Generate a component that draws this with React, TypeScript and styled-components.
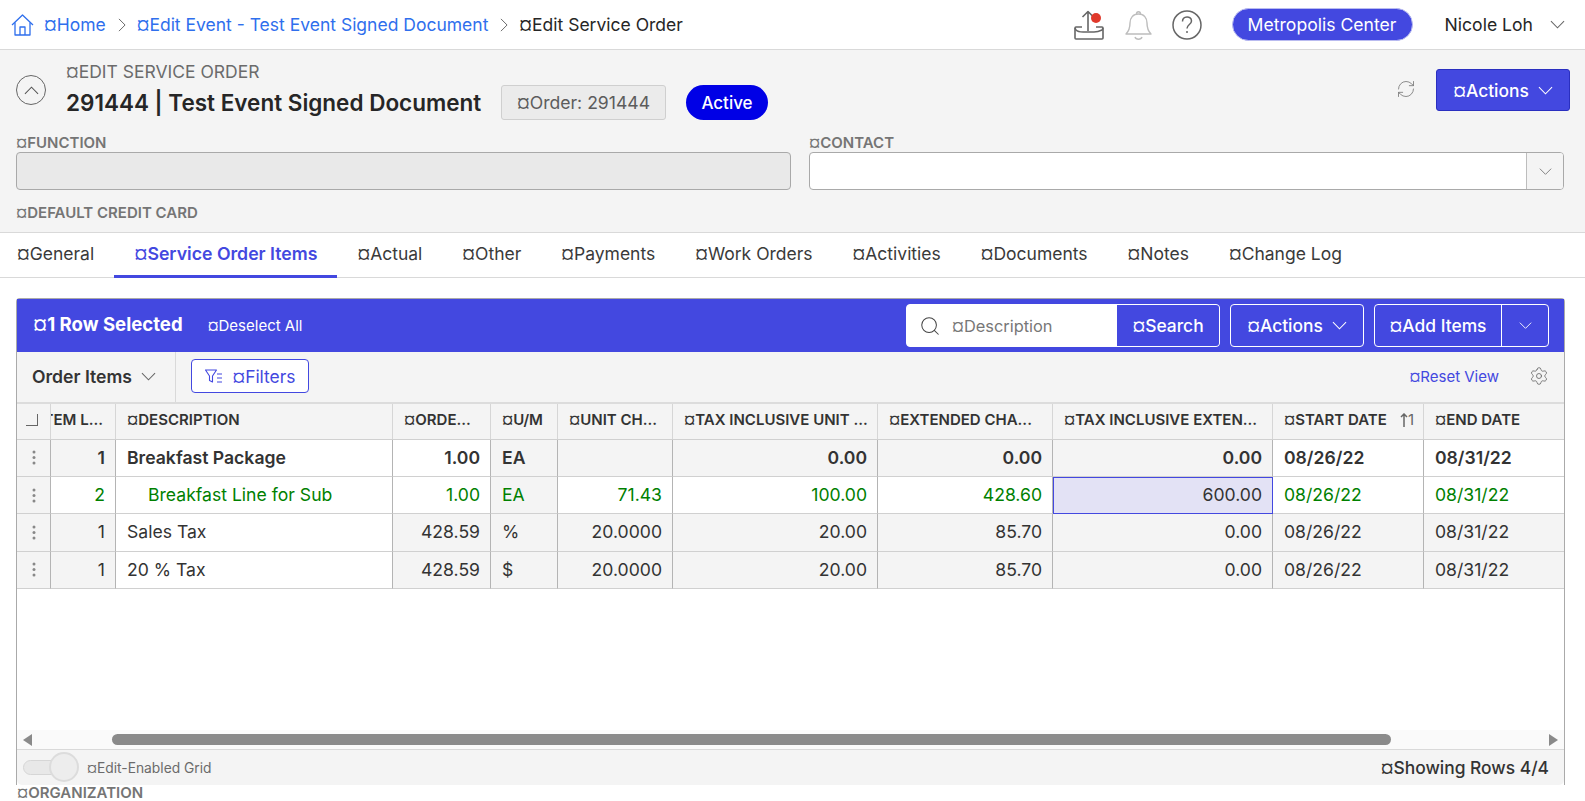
import React from "react";
import styled, { createGlobalStyle } from "styled-components";
import { RefreshCw, Search, Settings } from "lucide-react";

const GlobalStyle = createGlobalStyle`
  html, body {
    margin: 0;
    padding: 0;
    height: 100%;
    overflow: hidden;
    background: #fff;
    font-family: Inter, "Liberation Sans", sans-serif;
    color: #262626;
  }
`;

const BLUE = "#4348e0";
const COLUMNS = "34px 65px 277px 98px 67px 115px 205px 175px 220px 151px 140px";

const Page = styled.div`
  height: 801px;
  overflow: hidden;
`;

const TopBar = styled.header`
  height: 49px;
  border-bottom: 1px solid #d9d9d9;
  display: flex;
  align-items: center;
  padding: 0 20px 0 11px;
  font-size: 17.6px;
`;

const Crumb = styled.span<{ $current?: boolean }>`
  color: ${(p) => (p.$current ? "#262626" : "#2f6fed")};
  font-size: 17.5px;
  white-space: nowrap;
`;

const CrumbSep = styled.span`
  display: flex;
  color: #666;
  margin: 0 8px 0 9px;
`;

const HomeLink = styled.span`
  display: flex;
  margin-right: 10px;
  color: #2f6fed;
`;

const TopIcons = styled.div`
  margin-left: auto;
  display: flex;
  align-items: center;
  gap: 20px;
`;

const UploadSlot = styled.span`
  display: flex;
  margin-right: 1px;
`;

const Pill = styled.div`
  width: 181px;
  height: 33px;
  margin-left: 10px;
  box-sizing: border-box;
  border: 1px solid #b9bbf0;
  border-radius: 17px;
  background: ${BLUE};
  color: #fff;
  display: flex;
  align-items: center;
  justify-content: center;
  white-space: nowrap;
`;

const UserName = styled.div`
  display: flex;
  align-items: center;
  margin-left: 12px;
  gap: 17px;
  color: #262626;
  white-space: nowrap;

  svg {
    color: #666;
  }
`;

const HeaderPanel = styled.section`
  height: 183px;
  box-sizing: border-box;
  background: #f4f4f4;
  border-bottom: 1px solid #d9d9d9;
  padding: 12px 15px 0 16px;
`;

const HeaderTop = styled.div`
  display: flex;
  height: 73px;
`;

const Collapse = styled.div`
  width: 30px;
  height: 30px;
  box-sizing: border-box;
  margin-top: 13px;
  border: 1px solid #666;
  border-radius: 50%;
  display: flex;
  align-items: center;
  justify-content: center;
  color: #555;
`;

const TitleBlock = styled.div`
  margin-left: 20px;
`;

const Eyebrow = styled.div`
  font-size: 17.5px;
  line-height: 20px;
  color: #6b6b6b;
  white-space: nowrap;
`;

const TitleRow = styled.div`
  display: flex;
  align-items: flex-start;
  margin-top: 3px;
`;

const Title = styled.h1`
  margin: 0;
  width: 435px;
  font-size: 22.5px;
  line-height: 35px;
  font-weight: 600;
  color: #262626;
  white-space: nowrap;
`;

const OrderTag = styled.div`
  width: 165px;
  height: 35px;
  box-sizing: border-box;
  border: 1px solid #cfcfcf;
  border-radius: 3px;
  background: #ebebeb;
  color: #5c5c5c;
  font-size: 17.6px;
  display: flex;
  align-items: center;
  justify-content: center;
`;

const Status = styled.div`
  width: 82px;
  height: 35px;
  margin-left: 20px;
  border-radius: 18px;
  background: #0000e6;
  color: #fff;
  font-size: 17px;
  font-weight: 500;
  display: flex;
  align-items: center;
  justify-content: center;
`;

const HeaderActions = styled.div`
  margin-left: auto;
  display: flex;
  align-items: flex-start;
  gap: 20px;
  padding-top: 7px;
  color: #777;
`;

const RefreshSlot = styled.span`
  display: flex;
  margin-top: 10px;
`;

const PrimaryButton = styled.button`
  width: 134px;
  height: 42px;
  padding: 0;
  border: 1px solid #2a2fc0;
  border-radius: 3px;
  background: ${BLUE};
  color: #fff;
  font: 500 17.4px Inter, sans-serif;
  display: flex;
  align-items: center;
  justify-content: center;
  gap: 9px;
`;

const Fields = styled.div`
  display: grid;
  grid-template-columns: 1fr 755px;
  column-gap: 18px;
  padding-right: 6px;
`;

const FieldLabel = styled.label`
  display: block;
  font-size: 15px;
  line-height: 16px;
  padding-bottom: 1px;
  font-weight: 600;
  color: #757575;
  white-space: nowrap;
`;

const InputBox = styled.div<{ $disabled?: boolean }>`
  height: 38px;
  box-sizing: border-box;
  border: 1px solid #a9a9a9;
  border-radius: 4px;
  background: ${(p) => (p.$disabled ? "#e9e9e9" : "#fff")};
  display: flex;
  justify-content: flex-end;
`;

const SelectToggle = styled.div`
  width: 36px;
  border-left: 1px solid #bdbdbd;
  background: #f4f4f4;
  border-radius: 0 3px 3px 0;
  display: flex;
  align-items: center;
  justify-content: center;
  color: #777;
`;

const CardLabel = styled(FieldLabel)`
  margin-top: 15px;
`;

const TabBar = styled.nav`
  height: 44px;
  border-bottom: 1px solid #d9d9d9;
  display: flex;
`;

const Tab = styled.div<{ $active?: boolean }>`
  padding: 0 20px 1px;
  display: flex;
  align-items: center;
  font-size: ${(p) => (p.$active ? "17.7px" : "17.5px")};
  font-weight: ${(p) => (p.$active ? 600 : 400)};
  color: ${(p) => (p.$active ? BLUE : "#3a3a3a")};
  border-bottom: 3px solid ${(p) => (p.$active ? BLUE : "transparent")};
  margin-bottom: -1px;
  white-space: nowrap;

  &:first-child {
    padding-left: 17px;
  }
`;

const GridPanel = styled.section`
  height: 487px;
  margin: 20px 20px 0 16px;
  box-sizing: border-box;
  border: solid #aaa;
  border-width: 1px 1px 0;
  border-radius: 4px 4px 0 0;
  display: flex;
  flex-direction: column;
`;

const SelectionBar = styled.div`
  height: 53px;
  flex: none;
  background: ${BLUE};
  color: #fff;
  display: flex;
  align-items: center;
  padding: 0 15px 0 16px;
`;

const SelectedCount = styled.div`
  font-size: 18.6px;
  font-weight: 700;
  margin-bottom: 3px;
  white-space: nowrap;
`;

const Deselect = styled.div`
  font-size: 15px;
  margin-left: 25px;
  white-space: nowrap;
`;

const BarControls = styled.div`
  margin-left: auto;
  display: flex;
  gap: 10px;
`;

const SearchGroup = styled.div`
  width: 314px;
  height: 43px;
  box-sizing: border-box;
  border-radius: 4px;
  background: #fff;
  display: flex;
  overflow: hidden;
  border: 1px solid #fff;
`;

const SearchField = styled.div`
  flex: 1;
  display: flex;
  align-items: center;
  gap: 11px;
  padding-left: 12px;
  color: #444;
  font-size: 16.4px;

  span {
    color: #777;
  }
`;

const SearchButton = styled.div`
  width: 102px;
  background: ${BLUE};
  color: #fff;
  font-size: 17.4px;
  font-weight: 500;
  display: flex;
  align-items: center;
  justify-content: center;
`;

const OutlineGroup = styled.div<{ $width: number }>`
  width: ${(p) => p.$width}px;
  height: 43px;
  box-sizing: border-box;
  border: 1px solid #fff;
  border-radius: 4px;
  color: #fff;
  font-size: 17.4px;
  font-weight: 500;
  display: flex;
`;

const OutlinePart = styled.div`
  flex: 1;
  display: flex;
  align-items: center;
  justify-content: center;
  gap: 9px;
  white-space: nowrap;
`;

const CaretPart = styled(OutlinePart)`
  flex: 0 0 46px;
  border-left: 1px solid #fff;
`;

const Toolbar = styled.div`
  height: 50px;
  flex: none;
  box-sizing: border-box;
  background: #f4f4f4;
  display: flex;
  align-items: center;
  padding: 0 15px 2px 15px;
`;

const ViewPicker = styled.div`
  display: flex;
  align-items: center;
  align-self: stretch;
  gap: 9px;
  font-size: 17.6px;
  font-weight: 600;
  color: #333;
  width: 144px;
  margin-bottom: -2px;
  padding-bottom: 2px;
  border-right: 1px solid #d9d9d9;
  box-sizing: border-box;
  white-space: nowrap;

  svg {
    color: #666;
  }
`;

const FiltersButton = styled.div`
  width: 118px;
  height: 34px;
  margin-left: 15px;
  box-sizing: border-box;
  border: 1px solid ${BLUE};
  border-radius: 4px;
  background: #fff;
  color: ${BLUE};
  font-size: 17.4px;
  display: flex;
  align-items: center;
  justify-content: center;
  gap: 10px;
`;

const ToolbarEnd = styled.div`
  margin-left: auto;
  display: flex;
  align-items: center;
  gap: 30px;
  color: #666;
`;

const ResetLink = styled.span`
  color: ${BLUE};
  font-size: 15px;
  white-space: nowrap;
`;

const TableHead = styled.div`
  flex: none;
  height: 37.6px;
  box-sizing: border-box;
  display: grid;
  grid-template-columns: ${COLUMNS};
  background: #f4f4f4;
  border-top: 2px solid #dcdcdc;
  border-bottom: 1px solid #d0d0d0;
`;

const HeadCell = styled.div<{ $end?: boolean; $flush?: boolean }>`
  display: flex;
  align-items: center;
  justify-content: ${(p) => (p.$flush ? "flex-end" : p.$end ? "space-between" : "flex-start")};
  padding: 0 ${(p) => (p.$flush ? "12px" : p.$end ? "9px" : "6px")} 3px ${(p) => (p.$flush ? "0" : "11px")};
  overflow: hidden;
  white-space: nowrap;
  font-size: 15px;
  font-weight: 600;
  color: #333;
  box-sizing: border-box;
  border-right: 1px solid #d6d6d6;
  min-width: 0;

  &:last-child {
    border-right: 0;
  }
`;

const SelectAll = styled.span`
  width: 11px;
  height: 11px;
  margin-left: -2px;
  border: solid #666;
  border-width: 0 1px 1px 0;
  flex: none;
`;

const SortMark = styled.span`
  display: flex;
  align-items: center;
  color: #666;
  font-weight: 400;
`;

const TableBody = styled.div`
  flex: 1;
  min-height: 0;
`;

const Row = styled.div`
  display: grid;
  grid-template-columns: ${COLUMNS};
  height: 37.33px;
`;

const Cell = styled.div<{
  $white?: boolean;
  $right?: boolean;
  $bold?: boolean;
  $green?: boolean;
  $indent?: boolean;
  $focused?: boolean;
}>`
  box-sizing: border-box;
  display: flex;
  align-items: center;
  justify-content: ${(p) => (p.$right ? "flex-end" : "flex-start")};
  padding: 0 ${(p) => (p.$right ? "10px" : "8px")} 1px ${(p) => (p.$indent ? "32px" : "11px")};
  font-size: 17.6px;
  white-space: nowrap;
  font-weight: ${(p) => (p.$bold ? 600 : 400)};
  color: ${(p) => (p.$green ? "#008000" : "#333")};
  background: ${(p) => (p.$focused ? "#e3e2f5" : p.$white ? "#fff" : "#f4f4f4")};
  border-right: 1px solid #b4b4b4;
  border-bottom: 1px solid #d0d0d0;
  ${(p) => (p.$focused ? `outline: 1px solid ${BLUE}; outline-offset: -1px;` : "")}

  &:last-child {
    border-right: 0;
  }
`;

const DragCell = styled(Cell)`
  justify-content: center;
  padding: 0;
  color: #888;
`;

const ScrollBar = styled.div`
  flex: none;
  height: 20px;
  background: #fafafa;
  border-bottom: 1px solid #d9d9d9;
  display: flex;
  align-items: center;
  box-sizing: border-box;
  padding: 0 6px;
`;

const Arrow = styled.span<{ $dir: "left" | "right" }>`
  width: 0;
  height: 0;
  border-top: 6px solid transparent;
  border-bottom: 6px solid transparent;
  ${(p) => (p.$dir === "left" ? "border-right: 9px solid #8a8a8a;" : "border-left: 9px solid #8a8a8a;")}
`;

const ScrollTrack = styled.div`
  flex: 1;
  padding: 0 158px 0 80px;
`;

const Thumb = styled.div`
  height: 11px;
  border-radius: 6px;
  background: #8a8a8a;
`;

const Footer = styled.footer`
  flex: none;
  height: 35px;
  background: #f4f4f4;
  border-radius: 0 0 5px 5px;
  display: flex;
  align-items: center;
  padding: 0 15px 0 6px;
`;

const ToggleTrack = styled.div`
  position: relative;
  width: 44px;
  height: 15px;
  border: 1px solid #d6d6d6;
  border-radius: 8px;
  background: #e8e8e8;
  box-sizing: border-box;
  margin-right: 20px;
`;

const ToggleKnob = styled.div`
  position: absolute;
  right: -13px;
  top: -9px;
  width: 30px;
  height: 30px;
  box-sizing: border-box;
  border: 2px solid #dcdcdc;
  border-radius: 50%;
  background: #ededed;
`;

const ToggleLabel = styled.span`
  font-size: 13.8px;
  color: #6b6b6b;
  white-space: nowrap;
`;

const RowCount = styled.span`
  margin-left: auto;
  font-size: 17.4px;
  font-weight: 500;
  color: #333;
  white-space: nowrap;
`;

const OrgLabel = styled(FieldLabel)`
  margin-left: 17px;
`;

const Chevron = ({ dir = "down", size = 15 }: { dir?: "down" | "up" | "right"; size?: number }) => {
  const turn = { down: 0, up: 180, right: -90 }[dir];
  return (
    <svg width={size} height={size} viewBox="0 0 16 16" fill="none" stroke="currentColor" strokeWidth="1.1" transform={`rotate(${turn})`}>
      <path d="M1 4.5 8 11.5 15 4.5" />
    </svg>
  );
};

const HomeIcon = () => (
  <svg width="23" height="22" viewBox="0 0 23 22" fill="none" stroke="currentColor" strokeWidth="1.3" strokeLinejoin="round">
    <path d="M1 11 11.5 1 22 11" />
    <path d="M4 8.5V21h15V8.5" />
    <path d="M9 21v-8h5v8" />
  </svg>
);

const UploadIcon = () => (
  <svg width="30" height="30" viewBox="0 0 30 30" fill="none" stroke="#666" strokeWidth="1.6" strokeLinejoin="round">
    <path d="M14 21V1.5M8.5 7 14 1.5 19.5 7" />
    <path d="M8 17H2a1 1 0 0 0-1 1v10a1 1 0 0 0 1 1h26a1 1 0 0 0 1-1V18a1 1 0 0 0-1-1h-6" />
    <path d="M1 18l1 2c1 1 4 2 7 2h11c3 0 6-1 8-2l1-2" />
    <circle cx="22" cy="8" r="5" fill="#e0392b" stroke="none" />
  </svg>
);

const BellIcon = () => (
  <svg width="27" height="30" viewBox="0 0 27 30" fill="none" stroke="#bdbdbd" strokeWidth="1.4" strokeLinejoin="round">
    <path d="M1 24c3-3 4-6 4-11 0-5 3-9 8.5-9S22 8 22 13c0 5 1 8 4 11z" />
    <path d="M11.5 4c0-3 4-3 4 0" />
    <path d="M10 27c1 3 6 3 7 0" />
  </svg>
);

const HelpIcon = () => (
  <svg width="30" height="30" viewBox="0 0 30 30" fill="none" stroke="#666" strokeWidth="1.5">
    <circle cx="15" cy="15" r="14" />
    <path d="M10.5 11.5c0-6 9-6 9-.5 0 3.5-4.5 3.5-4.5 7.5" />
    <circle cx="15" cy="22" r="1" fill="#666" stroke="none" />
  </svg>
);

const FilterIcon = () => (
  <svg width="18" height="15" viewBox="0 0 18 15" fill="none" stroke="currentColor" strokeWidth="1.1" strokeLinejoin="round">
    <path d="M.5 1h11L7.5 7v6l-3-1.5V7z" />
    <path d="M12 5h5M12 9h5M12 13h5" />
  </svg>
);

const DotsIcon = () => (
  <svg width="4" height="15" viewBox="0 0 4 15" fill="currentColor">
    <circle cx="2" cy="2" r="1.5" />
    <circle cx="2" cy="7.5" r="1.5" />
    <circle cx="2" cy="13" r="1.5" />
  </svg>
);

const SortUpIcon = () => (
  <svg width="8" height="14" viewBox="0 0 8 14" fill="none" stroke="currentColor" strokeWidth="1.5">
    <path d="M4 14V1M1 4l3-3 3 3" />
  </svg>
);

const tabs = ["General", "Service Order Items", "Actual", "Other", "Payments", "Work Orders", "Activities", "Documents", "Notes", "Change Log"];

const heads = ["DESCRIPTION", "ORDE...", "U/M", "UNIT CH...", "TAX INCLUSIVE UNIT ...", "EXTENDED CHA...", "TAX INCLUSIVE EXTEN..."];

interface RowData {
  line: string;
  description: string;
  qty: string;
  um: string;
  unit: string;
  taxUnit: string;
  extended: string;
  taxExtended: string;
  bold?: boolean;
  green?: boolean;
}

const rows: RowData[] = [
  { line: "1", description: "Breakfast Package", qty: "1.00", um: "EA", unit: "", taxUnit: "0.00", extended: "0.00", taxExtended: "0.00", bold: true },
  { line: "2", description: "Breakfast Line for Sub", qty: "1.00", um: "EA", unit: "71.43", taxUnit: "100.00", extended: "428.60", taxExtended: "600.00", green: true },
  { line: "1", description: "Sales Tax", qty: "428.59", um: "%", unit: "20.0000", taxUnit: "20.00", extended: "85.70", taxExtended: "0.00" },
  { line: "1", description: "20 % Tax", qty: "428.59", um: "$", unit: "20.0000", taxUnit: "20.00", extended: "85.70", taxExtended: "0.00" },
];

const App = () => {
  return (
    <Page>
      <GlobalStyle />
      <TopBar>
        <HomeLink>
          <HomeIcon />
        </HomeLink>
        <Crumb>¤Home</Crumb>
        <CrumbSep>
          <Chevron dir="right" size={14} />
        </CrumbSep>
        <Crumb>¤Edit Event - Test Event Signed Document</Crumb>
        <CrumbSep>
          <Chevron dir="right" size={14} />
        </CrumbSep>
        <Crumb $current>¤Edit Service Order</Crumb>
        <TopIcons>
          <UploadSlot>
            <UploadIcon />
          </UploadSlot>
          <BellIcon />
          <HelpIcon />
          <Pill>Metropolis Center</Pill>
          <UserName>
            Nicole Loh
            <Chevron />
          </UserName>
        </TopIcons>
      </TopBar>

      <HeaderPanel>
        <HeaderTop>
          <Collapse>
            <Chevron dir="up" size={15} />
          </Collapse>
          <TitleBlock>
            <Eyebrow>¤EDIT SERVICE ORDER</Eyebrow>
            <TitleRow>
              <Title>291444 | Test Event Signed Document</Title>
              <OrderTag>¤Order: 291444</OrderTag>
              <Status>Active</Status>
            </TitleRow>
          </TitleBlock>
          <HeaderActions>
            <RefreshSlot>
              <RefreshCw size={20} strokeWidth={1} />
            </RefreshSlot>
            <PrimaryButton>
              ¤Actions
              <Chevron />
            </PrimaryButton>
          </HeaderActions>
        </HeaderTop>
        <Fields>
          <div>
            <FieldLabel>¤FUNCTION</FieldLabel>
            <InputBox $disabled />
          </div>
          <div>
            <FieldLabel>¤CONTACT</FieldLabel>
            <InputBox>
              <SelectToggle>
                <Chevron size={13} />
              </SelectToggle>
            </InputBox>
          </div>
        </Fields>
        <CardLabel>¤DEFAULT CREDIT CARD</CardLabel>
      </HeaderPanel>

      <TabBar>
        {tabs.map((t) => (
          <Tab key={t} $active={t === "Service Order Items"}>
            ¤{t}
          </Tab>
        ))}
      </TabBar>

      <GridPanel>
        <SelectionBar>
          <SelectedCount>¤1 Row Selected</SelectedCount>
          <Deselect>¤Deselect All</Deselect>
          <BarControls>
            <SearchGroup>
              <SearchField>
                <Search size={22} strokeWidth={1.1} />
                <span>¤Description</span>
              </SearchField>
              <SearchButton>¤Search</SearchButton>
            </SearchGroup>
            <OutlineGroup $width={134}>
              <OutlinePart>
                ¤Actions
                <Chevron />
              </OutlinePart>
            </OutlineGroup>
            <OutlineGroup $width={175}>
              <OutlinePart>¤Add Items</OutlinePart>
              <CaretPart>
                <Chevron size={13} />
              </CaretPart>
            </OutlineGroup>
          </BarControls>
        </SelectionBar>

        <Toolbar>
          <ViewPicker>
            Order Items
            <Chevron />
          </ViewPicker>
          <FiltersButton>
            <FilterIcon />
            ¤Filters
          </FiltersButton>
          <ToolbarEnd>
            <ResetLink>¤Reset View</ResetLink>
            <Settings size={20} strokeWidth={1} />
          </ToolbarEnd>
        </Toolbar>

        <TableHead>
          <HeadCell>
            <SelectAll />
          </HeadCell>
          <HeadCell $flush>¤ITEM L...</HeadCell>
          {heads.map((h) => (
            <HeadCell key={h}>¤{h}</HeadCell>
          ))}
          <HeadCell $end>
            ¤START DATE
            <SortMark>
              <SortUpIcon />1
            </SortMark>
          </HeadCell>
          <HeadCell>¤END DATE</HeadCell>
        </TableHead>

        <TableBody>
          {rows.map((r) => {
            const style = { $bold: r.bold, $green: r.green };
            return (
              <Row key={r.description}>
                <DragCell>
                  <DotsIcon />
                </DragCell>
                <Cell {...style} $right $white={r.green}>
                  {r.line}
                </Cell>
                <Cell {...style} $white $indent={r.green}>
                  {r.description}
                </Cell>
                <Cell {...style} $right $white={r.bold || r.green}>
                  {r.qty}
                </Cell>
                <Cell {...style}>{r.um}</Cell>
                <Cell {...style} $right $white={r.green}>
                  {r.unit}
                </Cell>
                <Cell {...style} $right $white={r.green}>
                  {r.taxUnit}
                </Cell>
                <Cell {...style} $right $white={r.green}>
                  {r.extended}
                </Cell>
                <Cell $bold={r.bold} $right $focused={r.green}>
                  {r.taxExtended}
                </Cell>
                <Cell {...style} $white={r.bold || r.green}>
                  08/26/22
                </Cell>
                <Cell {...style} $white={r.bold || r.green}>
                  08/31/22
                </Cell>
              </Row>
            );
          })}
        </TableBody>

        <ScrollBar>
          <Arrow $dir="left" />
          <ScrollTrack>
            <Thumb />
          </ScrollTrack>
          <Arrow $dir="right" />
        </ScrollBar>

        <Footer>
          <ToggleTrack>
            <ToggleKnob />
          </ToggleTrack>
          <ToggleLabel>¤Edit-Enabled Grid</ToggleLabel>
          <RowCount>¤Showing Rows 4/4</RowCount>
        </Footer>
      </GridPanel>
      <OrgLabel>¤ORGANIZATION</OrgLabel>
    </Page>
  );
};

export default App;
